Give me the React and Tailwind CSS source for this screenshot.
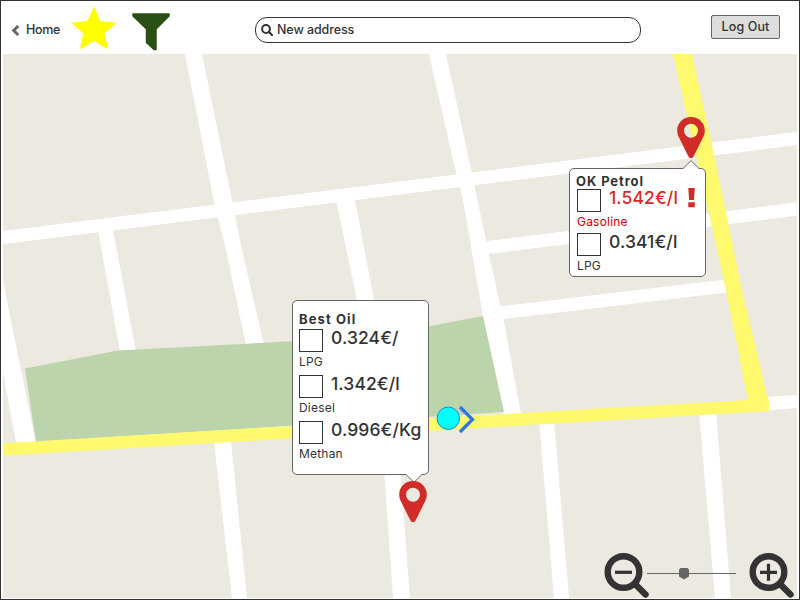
import React from "react";

function StreetMap() {
  return (
    <svg className="block h-[544px] w-[794px]" viewBox="3 54 794 544" fill="#fff">
      <rect x="3" y="54" width="794" height="544" fill="#ece9e1" />
      <path d="M185 54H202L233 205L242 250L264 345H246L226 250L214 202Z" />
      <path d="M429 54H446L469 160L488 250L504 322L521 414H504L483 317L463 200L453 160Z" />
      <path d="M98 230H113L136 352H120Z" />
      <path d="M335 195H354L375 305H358Z" />
      <path d="M3 281L18 355L36 443H16L9 405L3 372Z" />
      <path d="M214 442H231L247 598H232Z" />
      <path d="M382 440H398L410 598H393Z" />
      <path d="M539 420H554L569 598H554Z" />
      <path d="M699 412H716L731 598H715Z" />
      <g stroke="#fff" strokeWidth="13">
        <path d="M3 237.5L797 138.5" />
        <path d="M484 248L797 209" />
        <path d="M495 313.5L726 286" />
        <path d="M762 404L797 401.5" />
      </g>
      <path d="M25 368.5L118 350.5L270 342.5L350 338L430 326L483 316L504 412L36 442Z" fill="#bcd4ac" />
      <path d="M3 449.5L270 433.5L475 422L769 405" fill="none" stroke="#fff96e" strokeWidth="12.5" />
      <path d="M673 54H692L715 160L742 290L768 400V411H751L748 400L726 290L697 160Z" fill="#fff96e" />
    </svg>
  );
}

function Pin({ className }) {
  return (
    <svg className={"absolute h-[42px] w-7 " + className} viewBox="0 0 28 42">
      <path
        fillRule="evenodd"
        fill="#d22c28"
        d="M14 0C6 0 .2 6 .2 13.6C.2 16.6 1 18.6 2 20.6L11.3 39.3C12.4 41.8 15.6 41.8 16.7 39.3L26 20.6C27 18.6 27.8 16.6 27.8 13.6C27.8 6 22 0 14 0ZM14 6.8A7 7 0 1 1 14 20.8A7 7 0 1 1 14 6.8Z"
      />
    </svg>
  );
}

function Fuel({ price, name, tall, alert }) {
  return (
    <div className={tall ? "h-[46px]" : "h-11"}>
      <div className="flex h-[23px]">
        <div className="h-[23px] w-6 shrink-0 border border-[#333] bg-white" />
        <div
          className={
            "ml-2 whitespace-nowrap text-[17.5px] font-medium leading-[18px] tracking-[0.1px] " +
            (alert ? "text-[#d22c28]" : "")
          }
        >
          {price}
        </div>
        {alert && (
          <svg className="ml-auto mr-[2px] mt-[-1px] h-5 w-[9px] shrink-0" viewBox="0 0 9 20" fill="#d22c28">
            <path d="M1.3 0H7.8L7 12H2.1ZM1.3 14.3H7.8V19.3H1.3Z" />
          </svg>
        )}
      </div>
      <div
        className={
          "pt-[2px] text-[12px] leading-4 tracking-[0.2px] " + (alert ? "text-[#cc0000]" : "")
        }
      >
        {name}
      </div>
    </div>
  );
}

function ZoomButton({ plus }) {
  return (
    <svg className="h-[46px] w-[46px] shrink-0" viewBox="0 0 46 46" fill="none" stroke="#333">
      <circle cx="19.5" cy="19" r="15.8" strokeWidth="6.4" />
      <path d="M31 31L41.5 41.5" strokeWidth="6.4" strokeLinecap="round" />
      <path d={plus ? "M11 19.3H28M19.5 10.8V27.8" : "M11 19.3H28"} strokeWidth="3.2" />
    </svg>
  );
}

export default function App() {
  return (
    <div className="h-[600px] w-[800px] overflow-hidden border border-[#333] bg-white font-['Inter',sans-serif] text-[13px] text-[#333]">
      <header className="flex h-[53px] items-start">
        <button className="ml-[10px] mt-5 flex h-[18px] w-[50px] items-center gap-[6px] font-medium leading-[18px]">
          <svg className="h-[11px] w-[9px] shrink-0" viewBox="0 0 9 11" fill="none">
            <path d="M7.2 1L2.7 5.5L7.2 10" stroke="#666" strokeWidth="3" />
          </svg>
          <span className="text-[12.5px] tracking-[-0.3px]">Home</span>
        </button>
        <svg className="ml-[10px] mt-[5px] h-[44px] w-[46px]" viewBox="0 0 46 44">
          <path
            d="M23 2L28.8 15.8L44 17.3L32.5 27.2L36.2 42L23 34.2L9.8 42L13.2 27.2L1.7 17.3L17 15.8Z"
            fill="#ff0"
            stroke="#ff0"
            strokeWidth="1.5"
            strokeLinejoin="round"
          />
        </svg>
        <svg className="ml-[15px] mt-3 h-[38px] w-[38px]" viewBox="0 0 38 38">
          <path
            d="M1 1H37V3L24 16V36.5H22L14.5 29.5V16L1 3Z"
            fill="#2b5014"
            stroke="#2b5014"
            strokeWidth="1.5"
            strokeLinejoin="round"
          />
        </svg>
        <div className="ml-[85px] mt-4 flex h-[26px] w-[386px] items-center rounded-[12px] border border-[#333] pl-[5px]">
          <svg className="h-3 w-3" viewBox="0 0 12 12" fill="none" stroke="#333">
            <circle cx="5" cy="5" r="3.9" strokeWidth="2" />
            <path d="M8 8L11 11" strokeWidth="2.2" strokeLinecap="round" />
          </svg>
          <span className="ml-[4px] text-[12.5px] font-medium tracking-[-0.1px]">New address</span>
        </div>
        <button className="ml-[70px] mt-[14px] flex h-[24px] w-[69px] items-center justify-center rounded-[2px] border border-[#666] bg-[#ddd] text-[12.5px] font-medium tracking-[0.1px]">
          Log Out
        </button>
      </header>

      <main className="relative mx-[2px] h-[544px]">
        <StreetMap />

        <Pin className="left-[674px] top-[63px]" />
        <section className="absolute left-[566px] top-[114px] h-[109px] w-[137px] rounded-[5px] border border-[#666] bg-white px-[7px] pt-[5px]">
          <svg className="absolute left-[112px] top-[-9px] h-[10px] w-[18px]" viewBox="0 0 18 10">
            <path d="M0 8.5L1 8.5L9 .7L17 8.5H18V10H0Z" fill="#fff" />
            <path d="M0 8.5H1L9 .7L17 8.5H18" fill="none" stroke="#666" />
          </svg>
          <h2 className="ml-[-1px] h-[15px] whitespace-nowrap text-[13px] font-bold leading-[14px] tracking-[0.9px]">
            OK Petrol
          </h2>
          <Fuel price="1.542€/l" name="Gasoline" alert />
          <Fuel price="0.341€/l" name="LPG" />
        </section>

        <section className="absolute left-[289px] top-[246px] h-[175px] w-[137px] rounded-[5px] border border-[#666] bg-white pl-[6px] pt-[10px]">
          <h2 className="h-[18px] whitespace-nowrap text-[13px] font-bold leading-4 tracking-[1.1px]">
            Best Oil
          </h2>
          <Fuel price="0.324€/" name="LPG" tall />
          <Fuel price="1.342€/l" name="Diesel" tall />
          <Fuel price="0.996€/Kg" name="Methan" tall />
          <svg className="absolute bottom-[-9px] left-[112px] h-[10px] w-[18px]" viewBox="0 0 18 10">
            <path d="M0 0H18V1.5H17L9 9.3L1 1.5H0Z" fill="#fff" />
            <path d="M0 1.5H1L9 9.3L17 1.5H18" fill="none" stroke="#666" />
          </svg>
        </section>
        <Pin className="left-[396px] top-[427px]" />

        <svg className="absolute left-[433px] top-[350px] h-[30px] w-[40px]" viewBox="0 0 40 30">
          <circle cx="12.3" cy="14.3" r="11.2" fill="#0ff" stroke="#2685d0" />
          <path d="M24 3L36.5 15.5L24 28" fill="none" stroke="#2b78e4" strokeWidth="3.2" />
        </svg>

        <div className="absolute left-[601px] top-[499px] flex w-[192px] items-start">
          <ZoomButton />
          <div className="relative ml-[-3px] mt-[19px] h-[3px] w-[89px] shrink-0">
            <div className="mt-px h-px bg-[#666]" />
            <svg className="absolute left-[32px] top-[-4px] h-[12px] w-[10px]" viewBox="0 0 10 12">
              <path d="M1.5 0H8.5L10 1.5V8.5L5 11.5L0 8.5V1.5Z" fill="#666" />
            </svg>
          </div>
          <div className="ml-[13px]">
            <ZoomButton plus />
          </div>
        </div>
      </main>
    </div>
  );
}
